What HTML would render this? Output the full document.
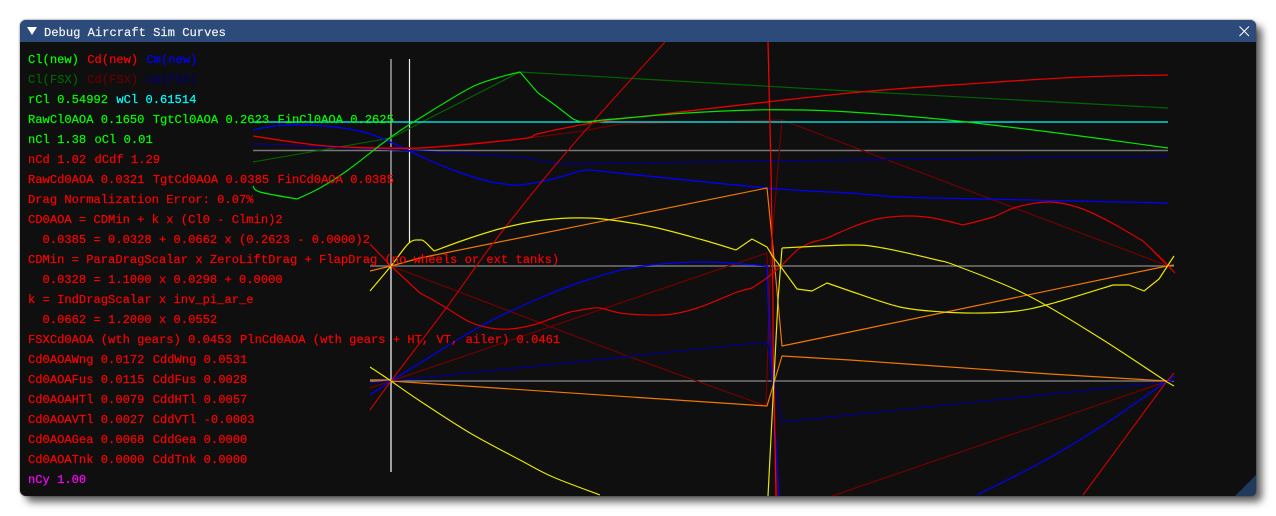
<!DOCTYPE html>
<html><head><meta charset="utf-8"><style>
html,body{margin:0;padding:0;background:#fff;width:1276px;height:516px;overflow:hidden}
#w{position:absolute;left:20px;top:20px;width:1236px;height:476px;background:#0f0f0f;border-radius:6px;box-shadow:0 0 2px rgba(0,0,0,.55),6px 6px 8px rgba(0,0,0,.62);overflow:hidden}
#t{position:absolute;left:0;top:0;width:1236px;height:22px;background:#2c4a7a}
svg{position:absolute;left:0;top:0}
#tt{position:absolute;left:44px;top:23px;color:#f2f2f2}
.l{position:absolute;left:28px;white-space:pre;height:20px}
#tt,.l{font:12.13px/20px "Liberation Mono",monospace;-webkit-text-stroke:.2px currentColor}
.l span+span{margin-left:8.3px}
.g{color:#0f0}.r{color:#f00}.b{color:#00f}.c{color:#0ff}.m{color:#f0f}
.dg{color:#006400}.dr{color:#640000}.db{color:#000070}
</style></head><body>
<div id="w"><div id="t"></div></div>
<svg width="1276" height="516" viewBox="0 0 1276 516" fill="none" stroke-width="1.2" stroke-linejoin="round">
<defs><clipPath id="c"><rect x="20" y="42" width="1236" height="454"/></clipPath></defs>
<path d="M1235 496L1256 475V491Q1256 496 1251 496Z" fill="#203a5c"/>
<path d="M27 27H37L32 35Z" fill="#fff"/>
<path d="M1239.5 26.5L1249 36M1249 26.5L1239.5 36" stroke="#fff" stroke-width="1"/>
<g clip-path="url(#c)">
<path d="M253 150.5H1168M370 266H1174M370 381H1174" stroke="#777" stroke-width="1.5"/>
<path d="M370 380.5H391" stroke="#b87838" stroke-width="2.5"/>
<path d="M391 59V266" stroke="#c4c4c4" stroke-width="1.2"/>
<path d="M391 266V472" stroke="#fff" stroke-width="1.2"/>
<path d="M409.5 59V243" stroke="#eee" stroke-width="1.2"/>
<!-- Cl FSX -->
<polyline stroke="#006400" points="253,162 391,138 420,123 520,72 850,91 1168,108"/>
<!-- Cd FSX -->
<polyline stroke="#700000" points="253,144 343,147 420,148 520,139 583,131 620,124 782,120 1168,266"/>
<polyline stroke="#700000" points="391,266 630,357 766,406 771,250 782,120" />
<polyline stroke="#700000" points="370,388 391,381 767,253 778,516"/>
<polyline stroke="#700000" points="778,516 835,495 1168,381"/>
<path d="M253 122H1168" stroke="#0ff" stroke-width="1.3"/>
<!-- Cm FSX -->
<polyline stroke="#000090" points="253,144 420,151 520,157 560,164 770,161 850,160 1168,156"/>
<polyline stroke="#000090" points="370,383 391,381 420,378 767,342 782,422 850,415 1167,382 1174,380"/>
<!-- Cm new -->
<polyline class="s" stroke="#00f" stroke-width="1.3" points="253,130 275,126 300,125 335,127 367,133 390,142 420,156 453,170 487,181 505,184 520,185 553,179 580,171 590,170"/>
<polyline class="s" stroke="#00f" stroke-width="1.3" points="590,170 767,188 850,193 900,197 983,199 1168,203"/>
<polyline stroke="#00f" points="370,395 391,381"/>
<polyline class="s" stroke="#00f" points="391,381 420,363 483,325 540,298 587,280 637,267 703,262 767,266"/>
<polyline stroke="#00f" points="767,266 768,300 770,340 779,496"/>
<polyline class="s" stroke="#00f" points="977,495 1042,462 1105,424 1167,381"/>
<path d="M1167 381L1174 376" stroke="#00f"/>
<!-- Orange -->
<polyline stroke="#f07800" points="370,271 391,266 420,258 767,188 774,258 782,346 850,332 1167,266 1174,265"/>
<polyline stroke="#f07800" points="391,381 420,383 767,406 782,356 850,360 1050,374 1167,381"/>
<!-- Cd new -->
<polyline class="s" stroke="#e60000" stroke-width="1.3" points="253,136 300,143 343,147 420,148 520,139 537,134 570,127 592,123 637,117 850,93 983,83 1083,77 1168,75"/>
<polyline stroke="#f00" stroke-width="1.2" points="768,42 771,170 773,300 773,340 776,496"/>
<polyline stroke="#e00000" points="370,244 391,266 420,293 433,300"/>
<polyline class="s" stroke="#e00000" points="433,300 448,309 470,322 490,328 510,329 533,325 553,318 570,312"/>
<polyline class="s" stroke="#e00000" points="570,312 587,309 600,308 620,313 647,315 673,314 700,307 737,292"/>
<polyline stroke="#e00000" points="737,292 752,288 767,278 780,267 797,250"/>
<polyline class="s" stroke="#e00000" points="797,250 810,243 827,238 850,228 877,219 907,216 933,218 963,225"/>
<polyline class="s" stroke="#e00000" points="963,225 993,217 1017,207 1050,202 1080,208 1110,222 1143,241"/>
<polyline stroke="#e00000" points="1143,241 1163,260 1175,273"/>
<polyline class="s" stroke="#c80000" points="370,410 391,381 447,307 488,250 543,180 592,123 665,42"/>
<polyline stroke="#c80000" points="1083,495 1167,381 1174,373"/>
<path d="M1152 250L1175 273" stroke="#c80000"/>
<!-- Yellow -->
<polyline class="s" stroke="#e6e600" points="370,291 391,266 409,243 420,240 425,242 434,251"/>
<polyline class="s" stroke="#e6e600" points="434,251 470,238 503,228 537,221 570,218 603,219 653,227 703,240 736,250"/>
<polyline stroke="#e6e600" points="736,250 752,239 767,247 773,257 781,267 797,289 812,291 827,283 850,291"/>
<polyline class="s" stroke="#e6e600" points="850,291 900,307 943,312 983,313 1017,311 1050,304 1113,285"/>
<polyline stroke="#e6e600" points="1113,285 1129,285 1144,291 1159,279 1174,256"/>
<polyline class="s" stroke="#e6e600" points="370,367 391,381 420,401 470,433 520,460 553,477 600,495"/>
<polyline stroke="#e6e600" points="768,496 778,300 782,248"/>
<polyline class="s" stroke="#e6e600" points="782,248 850,245 883,248 937,260 957,266 1027,295 1100,338 1167,382"/>
<path d="M1167 382L1174 386" stroke="#e6e600"/>
<!-- Cl new -->
<polyline class="s" stroke="#00e600" points="253,186 260,192 297,199"/>
<polyline class="s" stroke="#00e600" points="297,199 320,188 348,170 391,137 420,118 470,88 497,78 520,72"/>
<polyline stroke="#00e600" points="520,72 538,93 555,105 573,119"/>
<polyline class="s" stroke="#00e600" points="573,119 583,122 603,120 637,117 687,113 753,110 803,110 850,112 917,117 967,122 1050,132 1168,148"/>
</g>
</svg>
<div id="tt">Debug Aircraft Sim Curves</div>
<div class="l" style="top:50px"><span class="g">Cl(new)</span><span class="r">Cd(new)</span><span class="b">Cm(new)</span></div>
<div class="l" style="top:70px"><span class="dg">Cl(FSX)</span><span class="dr">Cd(FSX)</span><span class="db">Cm(FSX)</span></div>
<div class="l" style="top:90px"><span class="g">rCl 0.54992</span><span class="c">wCl 0.61514</span></div>
<div class="l g" style="top:110px"><span>RawCl0AOA 0.1650</span><span>TgtCl0AOA 0.2623</span><span>FinCl0AOA 0.2625</span></div>
<div class="l g" style="top:130px"><span>nCl 1.38</span><span>oCl 0.01</span></div>
<div class="l r" style="top:150px"><span>nCd 1.02</span><span>dCdf 1.29</span></div>
<div class="l r" style="top:170px"><span>RawCd0AOA 0.0321</span><span>TgtCd0AOA 0.0385</span><span>FinCd0AOA 0.0385</span></div>
<div class="l r" style="top:190px">Drag Normalization Error: 0.07%</div>
<div class="l r" style="top:210px">CD0AOA = CDMin + k x (Cl0 - Clmin)2</div>
<div class="l r" style="top:230px">  0.0385 = 0.0328 + 0.0662 x (0.2623 - 0.0000)2</div>
<div class="l r" style="top:250px">CDMin = ParaDragScalar x ZeroLiftDrag + FlapDrag (no wheels or ext tanks)</div>
<div class="l r" style="top:270px">  0.0328 = 1.1000 x 0.0298 + 0.0000</div>
<div class="l r" style="top:290px">k = IndDragScalar x inv_pi_ar_e</div>
<div class="l r" style="top:310px">  0.0662 = 1.2000 x 0.0552</div>
<div class="l r" style="top:330px"><span>FSXCd0AOA (wth gears) 0.0453</span><span>PlnCd0AOA (wth gears + HT, VT, ailer) 0.0461</span></div>
<div class="l r" style="top:350px"><span>Cd0AOAWng 0.0172</span><span>CddWng 0.0531</span></div>
<div class="l r" style="top:370px"><span>Cd0AOAFus 0.0115</span><span>CddFus 0.0028</span></div>
<div class="l r" style="top:390px"><span>Cd0AOAHTl 0.0079</span><span>CddHTl 0.0057</span></div>
<div class="l r" style="top:410px"><span>Cd0AOAVTl 0.0027</span><span>CddVTl -0.0003</span></div>
<div class="l r" style="top:430px"><span>Cd0AOAGea 0.0068</span><span>CddGea 0.0000</span></div>
<div class="l r" style="top:450px"><span>Cd0AOATnk 0.0000</span><span>CddTnk 0.0000</span></div>
<div class="l m" style="top:470px">nCy 1.00</div>
<script>
document.querySelectorAll('polyline.s').forEach(function(e){
  var p=e.getAttribute('points').trim().split(/\s+/).map(function(a){return a.split(',').map(Number)});
  var d='M'+p[0][0]+' '+p[0][1];
  for(var i=0;i<p.length-1;i++){
    var a=p[Math.max(i-1,0)],b=p[i],c=p[i+1],f=p[Math.min(i+2,p.length-1)];
    d+='C'+(b[0]+(c[0]-a[0])/6).toFixed(1)+' '+(b[1]+(c[1]-a[1])/6).toFixed(1)+' '+(c[0]-(f[0]-b[0])/6).toFixed(1)+' '+(c[1]-(f[1]-b[1])/6).toFixed(1)+' '+c[0]+' '+c[1];
  }
  var n=document.createElementNS('http://www.w3.org/2000/svg','path');
  n.setAttribute('d',d);
  n.setAttribute('stroke',e.getAttribute('stroke'));
  if(e.getAttribute('stroke-width'))n.setAttribute('stroke-width',e.getAttribute('stroke-width'));
  e.parentNode.replaceChild(n,e);
});
</script>
</body></html>
